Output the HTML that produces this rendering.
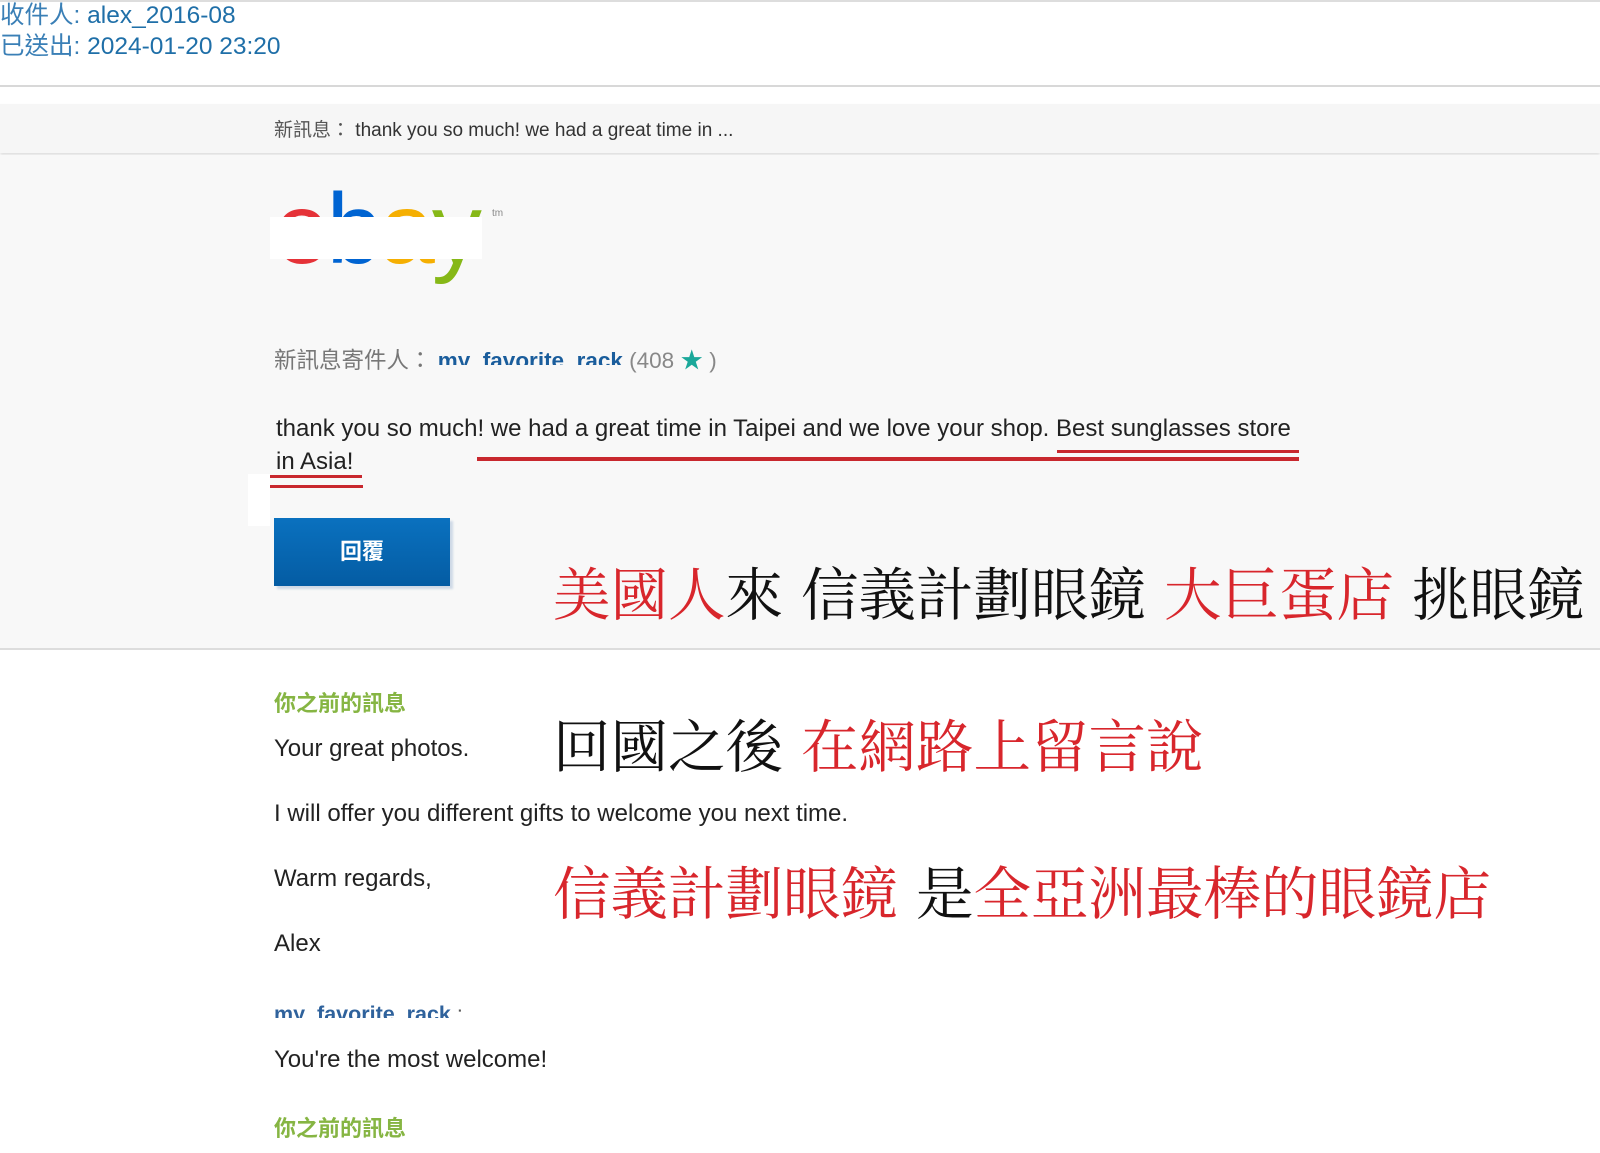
<!DOCTYPE html>
<html><head><meta charset="utf-8"><style>
body{margin:0;width:1600px;height:1153px;position:relative;background:#fff;font-family:"Liberation Sans","Noto Sans CJK TC",sans-serif;overflow:hidden}
.a{position:absolute;white-space:nowrap}
.big{font-family:"Liberation Serif","Noto Serif CJK SC",serif;font-size:57.5px;line-height:60px;color:#111}
.r{color:#d8262c}
.sp{display:inline-block;width:18px}
.t{font-size:24px;color:#222}
.g{color:#86b543;font-size:22px;font-weight:bold}
</style></head><body>
<div class="a" style="left:0;top:0;width:1600px;height:2px;background:#ddd"></div>
<div class="a" style="left:0;top:0;font-size:24.5px;color:#1f6fa8;line-height:31px"><span style="color:#3a7fb6">收件人:</span> alex_2016-08<br><span style="color:#3a7fb6">已送出:</span> 2024-01-20 23:20</div>
<div class="a" style="left:0;top:85px;width:1600px;height:2px;background:#d8d8d8"></div>
<div class="a" style="left:0;top:104px;width:1600px;height:49px;background:#f6f6f6;box-shadow:0 2px 3px #ddd"></div>
<div class="a" style="left:274px;top:115px;font-size:19px;color:#333"><span style="color:#555">新訊息：</span> thank you so much! we had a great time in ...</div>
<div class="a" style="left:0;top:155px;width:1600px;height:493px;background:#f8f8f8;border-bottom:2px solid #ddd"></div>
<div class="a" style="left:274px;top:179px;font-size:100px;line-height:1;letter-spacing:-3px;font-family:'Liberation Sans',sans-serif"><span style="color:#e53238">e</span><span style="color:#0064d2">b</span><span style="color:#f5af02">a</span><span style="color:#86b817">y</span></div>
<div class="a" style="left:492px;top:208px;font-size:10px;color:#888">tm</div>
<div class="a" style="left:270px;top:217px;width:212px;height:42px;background:#fff"></div>
<div class="a" style="left:274px;top:343px;font-size:22.5px;color:#777">新訊息寄件人： <span style="color:#1a5d9c;font-weight:bold">my_favorite_rack</span> <span style="color:#888">(408 <span style="color:#1aa89a">★</span> )</span></div>
<div class="a" style="left:435px;top:365px;width:195px;height:10px;background:#f8f8f8"></div>
<div class="a t" style="left:276px;top:412px;line-height:33px">thank you so much! we had a great time in Taipei and we love your shop. Best sunglasses store<br>in Asia!</div>
<div class="a" style="left:477px;top:457px;width:822px;height:4px;background:#c8282e"></div>
<div class="a" style="left:1057px;top:450px;width:242px;height:3px;background:#c8282e"></div>
<div class="a" style="left:268px;top:475px;width:94px;height:3px;background:#c8282e"></div>
<div class="a" style="left:268px;top:485px;width:95px;height:3px;background:#c8282e"></div>
<div class="a" style="left:248px;top:474px;width:22px;height:52px;background:#fff"></div>
<div class="a" style="left:274px;top:518px;width:176px;height:68px;background:linear-gradient(#0a71bf,#045ca3);box-shadow:3px 3px 2px #cfd9e6;color:#fff;font-size:22px;font-weight:bold;text-align:center;line-height:68px">回覆</div>
<div class="a big" style="left:553px;top:567px"><span class="r">美國人</span>來<span class="sp"></span>信義計劃眼鏡<span class="sp"></span><span class="r">大巨蛋店</span><span class="sp"></span>挑眼鏡</div>
<div class="a g" style="left:274px;top:686px">你之前的訊息</div>
<div class="a t" style="left:274px;top:735px">Your great photos.</div>
<div class="a big" style="left:553px;top:719px">回國之後<span class="sp"></span><span class="r">在網路上留言說</span></div>
<div class="a t" style="left:274px;top:800px">I will offer you different gifts to welcome you next time.</div>
<div class="a t" style="left:274px;top:865px">Warm regards,</div>
<div class="a big" style="left:553px;top:866px"><span class="r">信義計劃眼鏡</span><span class="sp"></span>是<span class="r">全亞洲最棒的眼鏡店</span></div>
<div class="a t" style="left:274px;top:930px">Alex</div>
<div class="a" style="left:274px;top:1000px;height:18px;overflow:hidden;font-size:21.5px;font-weight:bold;color:#2f629c;line-height:28px">my_favorite_rack <span style="color:#555;font-weight:normal">:</span></div>
<div class="a t" style="left:274px;top:1046px">You're the most welcome!</div>
<div class="a g" style="left:274px;top:1111px">你之前的訊息</div>
</body></html>
